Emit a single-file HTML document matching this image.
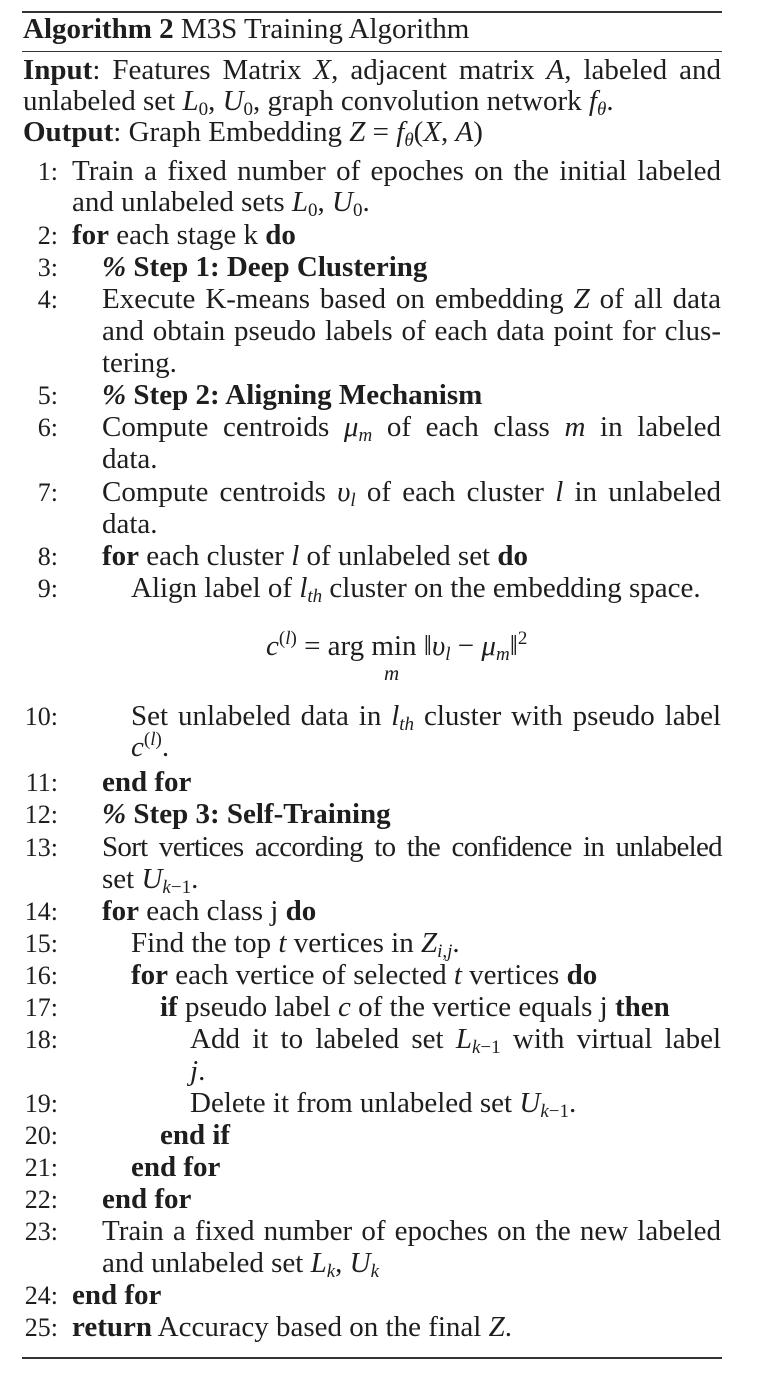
<!DOCTYPE html>
<html><head><meta charset="utf-8"><style>
body{margin:0;width:772px;height:1383px;background:#fff;position:relative;font-family:"Liberation Serif",serif;color:#1e1e1e;overflow:hidden}
.r{position:absolute;left:22px;width:700px;background:#333}
.l{position:absolute;font-size:29px;line-height:27px;white-space:nowrap}
.n{position:absolute;font-size:26px;line-height:27px;width:36px;text-align:right;left:22px}
.j{text-align:justify;text-align-last:justify;white-space:normal}
sub{font-size:19px;vertical-align:-5px;line-height:0}
sup{font-size:19px;vertical-align:11px;line-height:0}
b{font-weight:bold}
</style></head><body>
<div class="r" style="top:11px;height:2px"></div>
<div class="r" style="top:51px;height:1px"></div>
<div class="r" style="top:1357px;height:2px"></div>

<div class="l" style="left:23px;top:16px"><b>Algorithm 2</b> M3S Training Algorithm</div>
<div class="l j" style="left:23px;width:698px;top:57px"><b>Input</b>: Features Matrix <i>X</i>, adjacent matrix <i>A</i>, labeled and</div>
<div class="l" style="left:23px;top:88px">unlabeled set <i>L</i><sub>0</sub>, <i>U</i><sub>0</sub>, graph convolution network <i>f</i><sub><i>θ</i></sub>.</div>
<div class="l" style="left:23px;top:119px"><b>Output</b>: Graph Embedding <i>Z</i> = <i>f</i><sub><i>θ</i></sub>(<i>X</i>, <i>A</i>)</div>

<div class="n" style="top:158px">1:</div><div class="l j" style="left:72px;width:649px;top:158px">Train a fixed number of epoches on the initial labeled</div>
<div class="l" style="left:72px;top:189px">and unlabeled sets <i>L</i><sub>0</sub>, <i>U</i><sub>0</sub>.</div>
<div class="n" style="top:222px">2:</div><div class="l" style="left:72px;top:222px"><b>for</b> each stage k <b>do</b></div>
<div class="n" style="top:254px">3:</div><div class="l" style="left:102px;top:254px"><b><i>%</i> Step 1: Deep Clustering</b></div>
<div class="n" style="top:286px">4:</div><div class="l j" style="left:102px;width:619px;top:286px">Execute K-means based on embedding <i>Z</i> of all data</div>
<div class="l j" style="left:102px;width:619px;top:318px">and obtain pseudo labels of each data point for clus-</div>
<div class="l" style="left:102px;top:350px">tering.</div>
<div class="n" style="top:382px">5:</div><div class="l" style="left:102px;top:382px"><b><i>%</i> Step 2: Aligning Mechanism</b></div>
<div class="n" style="top:414px">6:</div><div class="l j" style="left:102px;width:619px;top:414px">Compute centroids <i>μ</i><sub><i>m</i></sub> of each class <i>m</i> in labeled</div>
<div class="l" style="left:102px;top:446px">data.</div>
<div class="n" style="top:479px">7:</div><div class="l j" style="left:102px;width:619px;top:479px">Compute centroids <i>υ</i><sub><i>l</i></sub> of each cluster <i>l</i> in unlabeled</div>
<div class="l" style="left:102px;top:511px">data.</div>
<div class="n" style="top:543px">8:</div><div class="l" style="left:102px;top:543px"><b>for</b> each cluster <i>l</i> of unlabeled set <b>do</b></div>
<div class="n" style="top:575px">9:</div><div class="l" style="left:131px;top:575px">Align label of <i>l</i><sub><i>th</i></sub> cluster on the embedding space.</div>
<div class="l" style="left:266px;top:633px"><i>c</i><sup>(<i>l</i>)</sup> = arg min ‖<i>υ</i><sub><i>l</i></sub> − <i>μ</i><sub><i>m</i></sub>‖<sup>2</sup></div>
<div class="l" style="left:384px;top:660px;font-size:21px"><i>m</i></div>
<div class="n" style="top:703px">10:</div><div class="l j" style="left:131px;width:590px;top:703px">Set unlabeled data in <i>l</i><sub><i>th</i></sub> cluster with pseudo label</div>
<div class="l" style="left:131px;top:734px"><i>c</i><sup>(<i>l</i>)</sup>.</div>
<div class="n" style="top:769px">11:</div><div class="l" style="left:102px;top:769px"><b>end for</b></div>
<div class="n" style="top:801px">12:</div><div class="l" style="left:102px;top:801px"><b><i>%</i> Step 3: Self-Training</b></div>
<div class="n" style="top:834px">13:</div><div class="l j" style="left:102px;width:620px;top:834px;letter-spacing:-0.7px">Sort vertices according to the confidence in unlabeled</div>
<div class="l" style="left:102px;top:866px">set <i>U</i><sub><i>k</i>−1</sub>.</div>
<div class="n" style="top:898px">14:</div><div class="l" style="left:102px;top:898px"><b>for</b> each class j <b>do</b></div>
<div class="n" style="top:930px">15:</div><div class="l" style="left:131px;top:930px">Find the top <i>t</i> vertices in <i>Z</i><sub><i>i</i>,<i>j</i></sub>.</div>
<div class="n" style="top:962px">16:</div><div class="l" style="left:131px;top:962px"><b>for</b> each vertice of selected <i>t</i> vertices <b>do</b></div>
<div class="n" style="top:994px">17:</div><div class="l" style="left:160px;top:994px"><b>if</b> pseudo label <i>c</i> of the vertice equals j <b>then</b></div>
<div class="n" style="top:1026px">18:</div><div class="l j" style="left:190px;width:531px;top:1026px">Add it to labeled set <i>L</i><sub><i>k</i>−1</sub> with virtual label</div>
<div class="l" style="left:190px;top:1058px"><i>j</i>.</div>
<div class="n" style="top:1090px">19:</div><div class="l" style="left:190px;top:1090px">Delete it from unlabeled set <i>U</i><sub><i>k</i>−1</sub>.</div>
<div class="n" style="top:1122px">20:</div><div class="l" style="left:160px;top:1122px"><b>end if</b></div>
<div class="n" style="top:1154px">21:</div><div class="l" style="left:131px;top:1154px"><b>end for</b></div>
<div class="n" style="top:1186px">22:</div><div class="l" style="left:102px;top:1186px"><b>end for</b></div>
<div class="n" style="top:1218px">23:</div><div class="l j" style="left:102px;width:619px;top:1218px">Train a fixed number of epoches on the new labeled</div>
<div class="l" style="left:102px;top:1250px">and unlabeled set <i>L</i><sub><i>k</i></sub>, <i>U</i><sub><i>k</i></sub></div>
<div class="n" style="top:1282px">24:</div><div class="l" style="left:72px;top:1282px"><b>end for</b></div>
<div class="n" style="top:1314px">25:</div><div class="l" style="left:72px;top:1314px"><b>return</b> Accuracy based on the final <i>Z</i>.</div>
</body></html>
